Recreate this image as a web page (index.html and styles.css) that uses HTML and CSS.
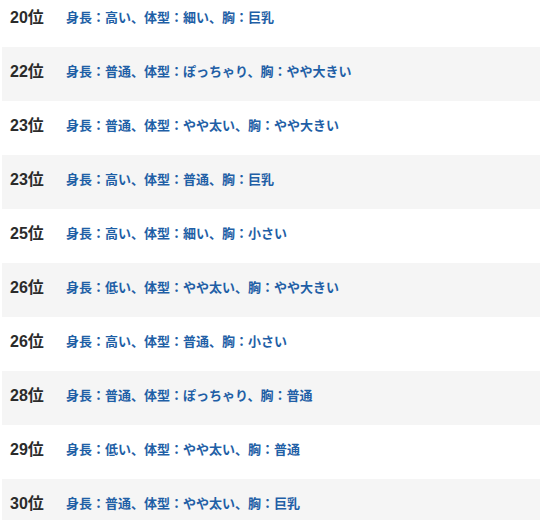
FILE: index.html
```html
<!DOCTYPE html>
<html lang="ja">
<head>
<meta charset="utf-8">
<link rel="stylesheet" href="styles.css">
</head>
<body>
<ul class="ranking">
  <li class="row"><span class="rank">20位</span><span class="desc">身長：高い、体型：細い、胸：巨乳</span></li>
  <li class="row alt"><span class="rank">22位</span><span class="desc">身長：普通、体型：ぽっちゃり、胸：やや大きい</span></li>
  <li class="row"><span class="rank">23位</span><span class="desc">身長：普通、体型：やや太い、胸：やや大きい</span></li>
  <li class="row alt"><span class="rank">23位</span><span class="desc">身長：高い、体型：普通、胸：巨乳</span></li>
  <li class="row"><span class="rank">25位</span><span class="desc">身長：高い、体型：細い、胸：小さい</span></li>
  <li class="row alt"><span class="rank">26位</span><span class="desc">身長：低い、体型：やや太い、胸：やや大きい</span></li>
  <li class="row"><span class="rank">26位</span><span class="desc">身長：高い、体型：普通、胸：小さい</span></li>
  <li class="row alt"><span class="rank">28位</span><span class="desc">身長：普通、体型：ぽっちゃり、胸：普通</span></li>
  <li class="row"><span class="rank">29位</span><span class="desc">身長：低い、体型：やや太い、胸：普通</span></li>
  <li class="row alt"><span class="rank">30位</span><span class="desc">身長：普通、体型：やや太い、胸：巨乳</span></li>
</ul>
</body>
</html>
```
FILE: styles.css
```css
html, body {
  margin: 0;
  padding: 0;
  background: #fff;
  overflow: hidden;
}
body {
  font-family: "Liberation Sans", "Noto Sans CJK JP", sans-serif;
}
.ranking {
  list-style: none;
  margin: -7px 1px 0 2px;
  padding: 0;
}
.row {
  display: grid;
  grid-template-columns: 56px 1fr;
  align-items: center;
  height: 54px;
  box-sizing: border-box;
  padding: 0 0 4px 8px;
}
.row.alt {
  background: #f5f5f5;
}
.rank {
  font-size: 16px;
  font-weight: bold;
  color: #2b2b2b;
  line-height: 20px;
}
.desc {
  font-family: "Noto Sans CJK JP", sans-serif;
  font-size: 13px;
  font-weight: bold;
  color: #1f5fa6;
  line-height: 20px;
  margin-bottom: 2px;
}
```
